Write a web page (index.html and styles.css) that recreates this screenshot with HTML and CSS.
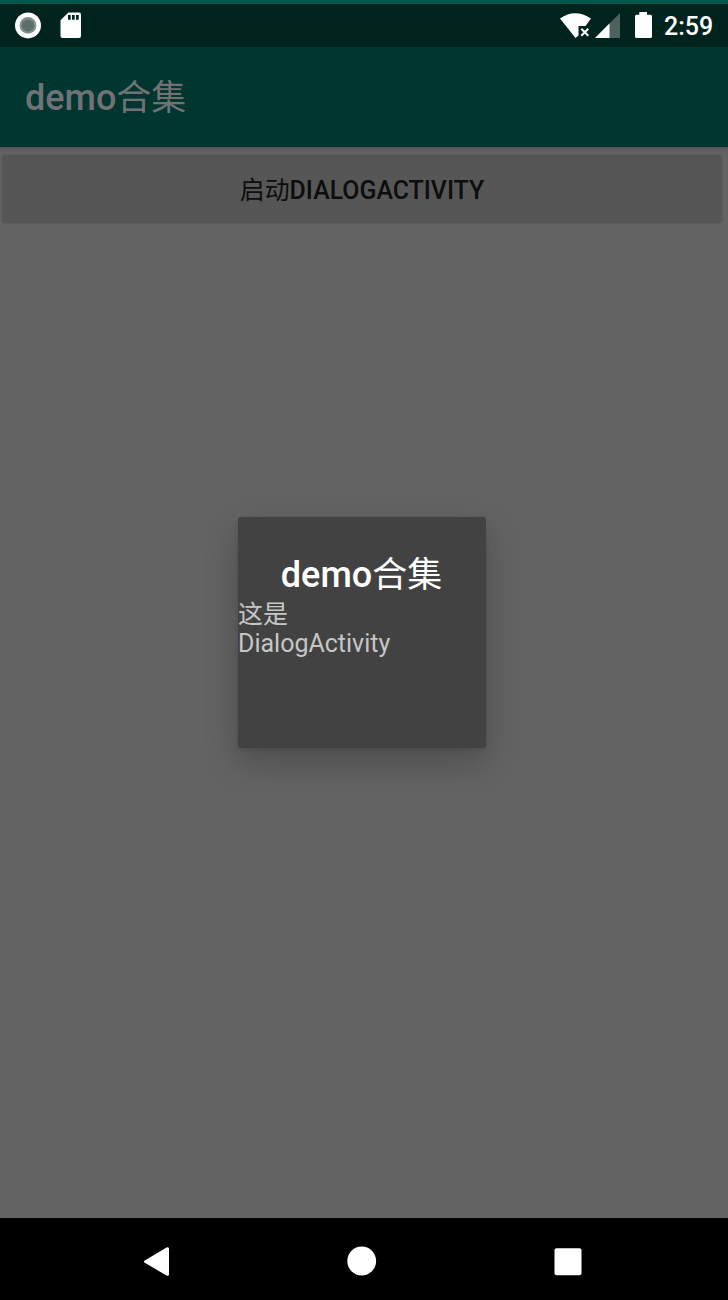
FILE: index.html
```html
<!DOCTYPE html>
<html lang="zh-CN">
<head>
<meta charset="utf-8">
<title>demo合集</title>
<link rel="stylesheet" href="styles.css">
</head>
<body>
<div class="screen">
  <header class="status">
    <svg class="status-left" width="100" height="43" viewBox="0 4 100 43">
      <circle cx="28" cy="25.4" r="13" fill="#fff"/>
      <circle cx="28" cy="25.4" r="8.4" fill="#7d8f8c"/>
      <circle cx="28" cy="25.4" r="6" fill="#5b706d"/>
      <path d="M68.3 12.5H79a2 2 0 0 1 2 2V36a2 2 0 0 1-2 2H62.500a2 2 0 0 1-2-2V20.300Z" fill="#fff"/>
      <path d="M68 15h2.700v4.800H68zM72 15h2.700v4.800H72zM76 15h2.700v4.800H76z" fill="#00231e"/>
    </svg>
    <div class="status-right">
      <svg width="100" height="43" viewBox="556 4 100 43">
        <path d="M560 18.500Q575 8 591 18.500L585.500 26H578.500V35.500L575.500 38Z" fill="#fff"/>
        <path d="M581.300 28.800l7 7m0-7l-7 7" stroke="#fff" stroke-width="2"/>
        <path d="M620 13V38H595Z" fill="#4d625f"/>
        <path d="M609.500 23.500V38H595Z" fill="#fff"/>
        <path d="M639.300 12H647v2.800h3.500a1.500 1.500 0 0 1 1.500 1.500V36.500a1.500 1.500 0 0 1-1.500 1.500h-14a1.500 1.500 0 0 1-1.500-1.500V16.300a1.500 1.500 0 0 1 1.500-1.500h2.800Z" fill="#fff"/>
      </svg>
      <span class="clock">2:59</span>
    </div>
  </header>
  <div class="appbar"><span class="title">demo<span class="cjk">合集</span></span></div>
  <main class="content">
    <button class="launch"><span class="cjk">启动</span>DIALOGACTIVITY</button>
    <section class="dialog">
      <h1 class="title">demo<span class="cjk">合集</span></h1>
      <p class="message">这是<br>DialogActivity</p>
    </section>
  </main>
  <nav class="nav">
    <svg width="728" height="82" viewBox="0 1218 728 82" fill="#fff">
      <path d="M144.800 1260.500L166.500 1247.500Q169 1246.400 169 1248.800V1274.200Q169 1276.600 166.500 1275.500L144.800 1262.800Q143 1261.600 144.800 1260.500Z"/>
      <circle cx="361.700" cy="1261" r="14.400"/>
      <rect x="554.500" y="1248.300" width="27" height="27" rx="2"/>
    </svg>
  </nav>
</div>
</body>
</html>
```
FILE: styles.css
```css
body {
  margin: 0;
  font-family: Roboto, "Noto Sans CJK SC", sans-serif;
}

.screen {
  display: flex;
  flex-direction: column;
  box-sizing: border-box;
  width: 728px;
  height: 1300px;
  border-top: 4px solid #00574b;
  background: #636363;
  overflow: hidden;
}

.status {
  display: flex;
  justify-content: space-between;
  height: 43px;
  background: #00231e;
}

.status-right {
  display: flex;
  width: 172px;
}

.clock {
  margin-left: 8px;
  color: #fff;
  font-size: 25px;
  font-weight: 500;
  line-height: 46px;
}

.appbar {
  box-sizing: border-box;
  height: 100px;
  padding-left: 25px;
  background: #003530;
  color: #707274;
  line-height: 102px;
}

.title {
  font-size: 36px;
  font-weight: 500;
  white-space: nowrap;
}

.cjk {
  font-weight: 400;
}

.title .cjk {
  font-size: 35px;
}

.content {
  display: flex;
  flex-direction: column;
  align-items: center;
  height: 1071px;
  background: linear-gradient(#595659, #646262 6px, #636363 10px);
}

.launch {
  align-self: flex-start;
  width: 720px;
  height: 68px;
  margin: 8px 0 0 2px;
  padding: 3px 0 0;
  border: 0;
  border-radius: 4px;
  background: #565656;
  box-shadow: 0 0 2px rgba(0, 0, 0, .2);
  color: #0d0d0d;
  font: 500 24.900px/65px Roboto, "Noto Sans CJK SC", sans-serif;
}

.dialog {
  width: 248px;
  height: 231px;
  margin: 294px 4px 0 0;
  border-radius: 3px;
  background: #424242;
  box-shadow: 0 14px 34px rgba(0, 0, 0, .22), 0 2px 5px rgba(0, 0, 0, .1);
}

.dialog .title {
  margin: 37px 1px 0 0;
  color: #fff;
  line-height: 43px;
  text-align: center;
}

.message {
  margin: 3px 0 0;
  color: #c6c6c6;
  font-size: 25px;
  line-height: 29px;
}

.nav {
  height: 82px;
  background: #000;
}
```
